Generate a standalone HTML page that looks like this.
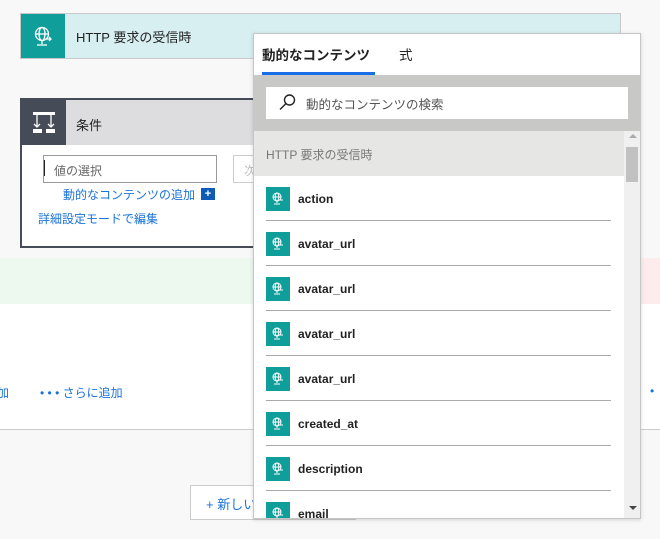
<!DOCTYPE html>
<html><head><meta charset="utf-8"><style>
*{box-sizing:border-box;margin:0;padding:0}
body{width:660px;height:539px;background:#f8f8f8;font-family:"Liberation Sans","Noto Sans CJK JP",sans-serif;position:relative;overflow:hidden;font-size:13px;color:#222}
.abs{position:absolute}
.teal{background:#0f9e9a}
</style></head><body>
<div class="abs" style="left:20px;top:13px;width:601px;height:46px;border:1px solid #c8c8c8;background:#d7eff1"></div>
<div class="abs teal" style="left:21px;top:14px;width:44px;height:44px">
<svg width="44" height="44" viewBox="0 0 44 44" fill="none" stroke="#fff" stroke-width="1.3"><circle cx="21" cy="20" r="6.5"/><ellipse cx="21" cy="20" rx="3" ry="6.5"/><line x1="14.5" y1="20" x2="27.5" y2="20"/><line x1="21" y1="27" x2="21" y2="30"/><line x1="16" y1="31" x2="26" y2="31"/><path d="M25 25h5m-2-2l2 2-2 2"/></svg></div>
<div class="abs" style="left:76px;top:27px;font-size:13px">HTTP 要求の受信時</div>

<div class="abs" style="left:0;top:258px;width:660px;height:46px;background:#edf8ee"></div>
<div class="abs" style="left:640px;top:258px;width:20px;height:46px;background:#fdeceb"></div>
<div class="abs" style="left:0;top:304px;width:660px;height:126px;background:#fff;border-bottom:1px solid #ccc"></div>
<div class="abs" style="left:-3px;top:384px;color:#1a73d9;font-size:12px">加</div>
<div class="abs" style="left:40px;top:384px;color:#1a73d9;font-size:12px">• • • さらに追加</div>
<div class="abs" style="left:650px;top:384px;color:#1a73d9;font-size:12px">•</div>
<div class="abs" style="left:190px;top:485px;width:166px;height:35px;border:1px solid #ccc;background:#fff;color:#1a73d9;padding:8px 0 0 15px;font-size:13px">+ 新しい</div>

<div class="abs" style="left:20px;top:98px;width:245px;height:150px;border:2px solid #464c57;background:#fff"></div>
<div class="abs" style="left:22px;top:100px;width:243px;height:45px;background:#dddddf"></div>
<div class="abs" style="left:22px;top:100px;width:44px;height:45px;background:#464c57">
<svg width="44" height="45" viewBox="0 0 44 45" fill="none" stroke="#fff" stroke-width="1.3"><rect x="11" y="12" width="22" height="3" fill="#fff" stroke="none"/><line x1="15" y1="15" x2="15" y2="27"/><line x1="29" y1="15" x2="29" y2="27"/><path d="M12 24l3 3 3-3M26 24l3 3 3-3"/><rect x="11" y="29" width="9" height="4" fill="#fff" stroke="none"/><rect x="24" y="29" width="9" height="4" fill="#fff" stroke="none"/></svg></div>
<div class="abs" style="left:76px;top:115px;font-size:13px">条件</div>
<div class="abs" style="left:43px;top:155px;width:174px;height:28px;border:1px solid #999;padding:6px 0 0 10px;font-size:12px;color:#666">値の選択</div>
<div class="abs" style="left:44px;top:160px;width:1px;height:16px;background:#222"></div>
<div class="abs" style="left:233px;top:155px;width:30px;height:28px;border:1px solid #ccc;padding:6px 0 0 10px;font-size:12px;color:#bbb">次</div>
<div class="abs" style="left:63px;top:186px;font-size:12px;color:#1a73d9">動的なコンテンツの追加</div>
<div class="abs" style="left:201px;top:188px;width:14px;height:12px;background:#0e5bb5;color:#fff;font-size:11px;line-height:12px;text-align:center;font-weight:bold">+</div>
<div class="abs" style="left:38px;top:210px;font-size:12px;color:#1a73d9">詳細設定モードで編集</div>

<div class="abs" style="left:253px;top:33px;width:388px;height:486px;border:1px solid #c6c6c6;background:#fff;box-shadow:0 1px 4px rgba(0,0,0,.15);overflow:hidden">
 <div class="abs" style="left:8px;top:10px;font-size:13.5px;font-weight:bold">動的なコンテンツ</div>
 <div class="abs" style="left:145px;top:10px;font-size:13.5px">式</div>
 <div class="abs" style="left:8px;top:38px;width:113px;height:3px;background:#1a6fe8"></div>
 <div class="abs" style="left:0;top:41px;width:388px;height:56px;background:#c8c9c6"></div>
 <div class="abs" style="left:12px;top:53px;width:362px;height:32px;background:#fff"></div>
 <svg class="abs" style="left:24px;top:58px" width="20" height="20" viewBox="0 0 20 20" fill="none" stroke="#222" stroke-width="1.4"><circle cx="11.5" cy="8" r="5"/><line x1="8" y1="11.5" x2="2" y2="17.5"/></svg>
 <div class="abs" style="left:52px;top:60px;font-size:12.5px;color:#555">動的なコンテンツの検索</div>
 <div class="abs" style="left:0;top:97px;width:370px;height:45px;background:#e6e7e5"></div>
 <div class="abs" style="left:12px;top:112px;font-size:12px;color:#777">HTTP 要求の受信時</div>
 <div class="abs" style="left:370px;top:97px;width:17px;height:389px;background:#f0f0f0"></div>
 <div class="abs" style="left:379px;top:100px;width:0;height:0;border:4px solid transparent;border-bottom-color:#aaa;border-top:0;margin-left:-4px"></div>
 <div class="abs" style="left:372px;top:113px;width:12px;height:35px;background:#c1c1c1"></div>
 <div class="abs" style="left:379px;top:472px;width:0;height:0;border:4px solid transparent;border-top-color:#444;border-bottom:0;margin-left:-4px"></div>
</div>
<div id="items" class="abs" style="left:254px;top:176px;width:369px;height:342px;overflow:hidden"></div>
<script>
var n=["action","avatar_url","avatar_url","avatar_url","avatar_url","created_at","description","email"],h="";
n.forEach(function(t,i){var y=i*45;h+='<div class="abs teal" style="left:12px;top:'+(y+11)+'px;width:24px;height:24px"><svg width="24" height="24" viewBox="0 0 24 24" fill="none" stroke="#fff" stroke-width="1"><circle cx="11" cy="10" r="4"/><ellipse cx="11" cy="10" rx="1.8" ry="4"/><line x1="7" y1="10" x2="15" y2="10"/><line x1="11" y1="14" x2="11" y2="16"/><line x1="8" y1="17" x2="14" y2="17"/><path d="M14 13h3"/></svg></div><div class="abs" style="left:44px;top:'+(y+16)+'px;font-size:12px;font-weight:bold;color:#222">'+t+'</div>'+(i<7?'<div class="abs" style="left:12px;top:'+(y+44)+'px;width:345px;height:1px;background:#aaa"></div>':'');});
document.getElementById('items').innerHTML=h;
</script>
</body></html>
